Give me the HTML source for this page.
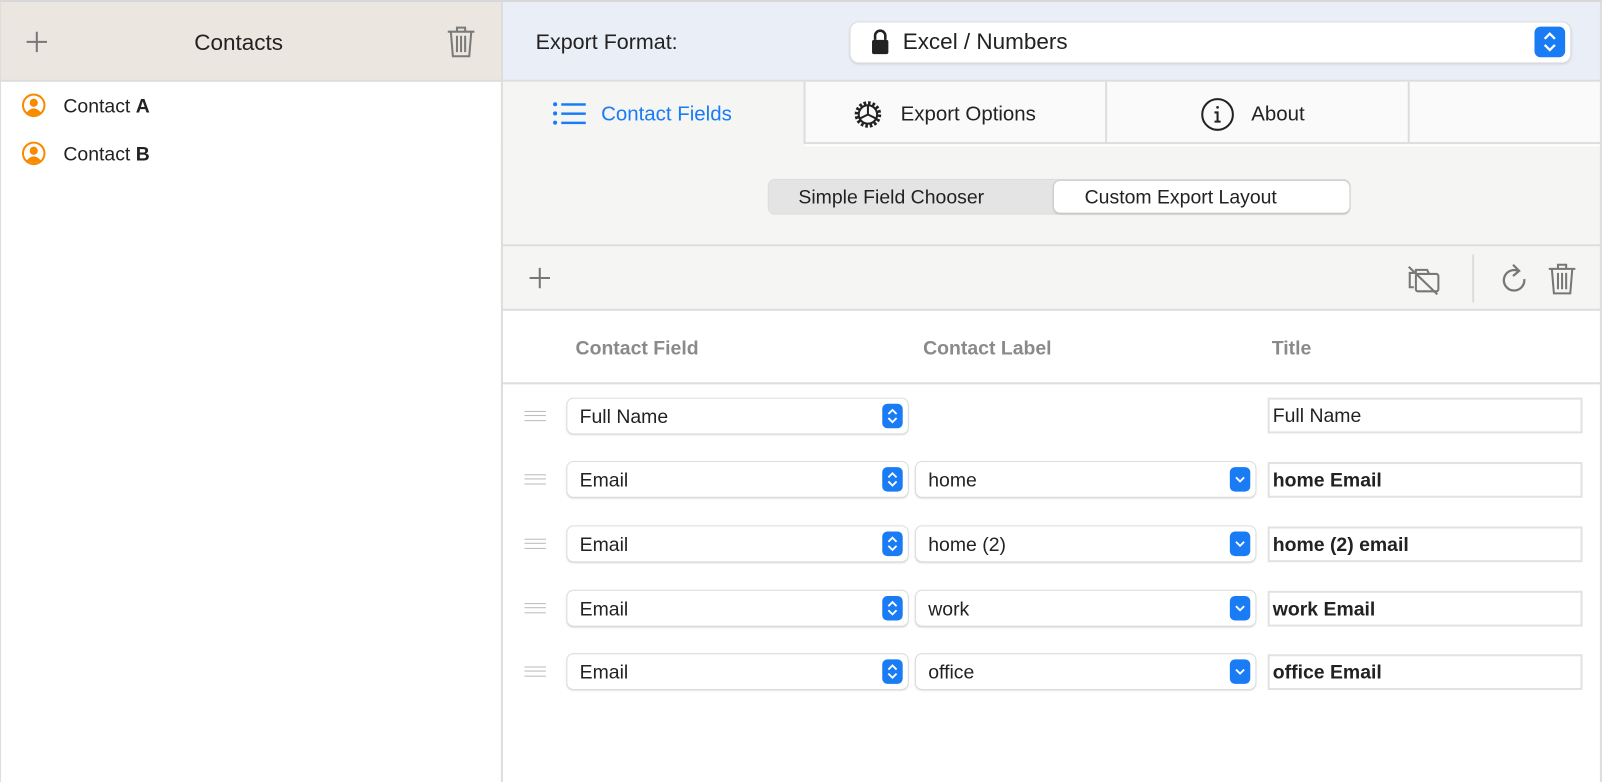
<!DOCTYPE html>
<html><head><meta charset="utf-8"><style>
*{box-sizing:border-box;margin:0;padding:0}
body{width:1602px;height:782px;overflow:hidden;background:#fff;font-family:"Liberation Sans",sans-serif;color:#222}
#w{position:absolute;left:0;top:0;width:1567px;height:765px;transform:scale(1.0223,1.0222);transform-origin:0 0}
.a{position:absolute}
.pop{position:absolute;height:34px;background:#fff;border-radius:6px;box-shadow:0 0 0 1px #ddd,0 1px 2px rgba(0,0,0,.25);font-size:19px;line-height:37px;padding-left:12px}
.st{position:absolute;right:5px;top:5px;width:20px;height:24px;border-radius:5px;background:#1a7cf5}
.inp{position:absolute;height:35px;border:2px solid #e2e2e2;font-size:19px;line-height:34px;padding-left:3px;background:#fff}
.hd{position:absolute;top:331px;font-size:19px;font-weight:bold;color:#8a8a8a}
.hnd{position:absolute;left:513px;width:21px;height:10px;border-top:1.5px solid #bbb;border-bottom:1.5px solid #bbb}
.hnd:after{content:"";position:absolute;left:0;right:0;top:2.8px;border-top:1.5px solid #bbb}
</style></head><body><div id="w">
<div class="a" style="left:0;top:0;width:1567px;height:2px;background:#d8d8d8"></div>
<!-- left -->
<div class="a" style="left:0;top:2px;width:490px;height:78px;background:#ebe6e0;border-bottom:2px solid #ddd"></div>
<div class="a" style="left:0;top:2px;width:1px;height:763px;background:#ddd"></div>
<svg class="a" style="left:25px;top:30px" width="22" height="22"><path d="M11 1V21M1 11H21" stroke="#777" stroke-width="2"/></svg>
<div class="a" style="left:190px;top:29px;font-size:22px">Contacts</div>
<svg class="a" style="left:437px;top:25px" width="28" height="32" fill="none" stroke="#7a7a7a" stroke-width="2"><path d="M1 6H27M10 6V2H18V6M4 6L6 30H22L24 6M10 10V26M14 10V26M18 10V26"/></svg>
<svg class="a" style="left:21px;top:91px" width="24" height="24"><circle cx="12" cy="12" r="10.5" fill="none" stroke="#f88a00" stroke-width="2"/><circle cx="12" cy="9.5" r="4" fill="#f88a00"/><path d="M5 19Q12 11 19 19Q12 24 5 19Z" fill="#f88a00"/></svg>
<div class="a" style="left:62px;top:94px;font-size:19px">Contact <b>A</b></div>
<svg class="a" style="left:21px;top:138px" width="24" height="24"><circle cx="12" cy="12" r="10.5" fill="none" stroke="#f88a00" stroke-width="2"/><circle cx="12" cy="9.5" r="4" fill="#f88a00"/><path d="M5 19Q12 11 19 19Q12 24 5 19Z" fill="#f88a00"/></svg>
<div class="a" style="left:62px;top:141px;font-size:19px">Contact <b>B</b></div>
<div class="a" style="left:490px;top:2px;width:2px;height:763px;background:#ddd"></div>
<!-- right header -->
<div class="a" style="left:492px;top:2px;width:1075px;height:78px;background:#eaeef6;border-bottom:2px solid #ddd"></div>
<div class="a" style="left:524px;top:30px;font-size:21px">Export Format:</div>
<div class="a" style="left:832px;top:22px;width:704px;height:39px;background:#fff;border-radius:8px;box-shadow:0 0 0 1px #ddd,0 1px 3px rgba(0,0,0,.2)"></div>
<svg class="a" style="left:851px;top:27px" width="20" height="27"><path d="M5 12V8A5 5 0 0 1 15 8V12" fill="none" stroke="#222" stroke-width="2.5"/><rect x="2" y="12" width="16" height="14" rx="2" fill="#222"/></svg>
<div class="a" style="left:883px;top:28px;font-size:22px">Excel / Numbers</div>
<div class="a" style="left:1501px;top:26px;width:30px;height:30px;border-radius:6px;background:#1a7cf5"></div>
<svg class="a" style="left:1501px;top:26px" width="30" height="30" fill="none" stroke="#fff" stroke-width="2.2"><path d="M10 12L15 7L20 12M10 18L15 23L20 18"/></svg>
<!-- tabs -->
<div class="a" style="left:492px;top:80px;width:1075px;height:61px;background:#f9faf9"></div>
<div class="a" style="left:492px;top:80px;width:295px;height:63px;background:#f5f5f3"></div>
<div class="a" style="left:787px;top:139px;width:780px;height:2px;background:#ddd"></div>
<div class="a" style="left:786px;top:80px;width:2px;height:61px;background:#ddd"></div>
<div class="a" style="left:1081px;top:80px;width:2px;height:61px;background:#ddd"></div>
<div class="a" style="left:1377px;top:80px;width:2px;height:61px;background:#ddd"></div>
<svg class="a" style="left:540px;top:98px" width="34" height="28" fill="#1a7cf5"><circle cx="3" cy="4" r="2"/><circle cx="3" cy="13" r="2"/><circle cx="3" cy="22" r="2"/><rect x="9" y="3" width="24" height="2.4"/><rect x="9" y="12" width="24" height="2.4"/><rect x="9" y="21" width="24" height="2.4"/></svg>
<div class="a" style="left:588px;top:101px;font-size:20px;color:#1a7cf5">Contact Fields</div>
<svg class="a" style="left:833px;top:96px" width="32" height="32" fill="none" stroke="#222" stroke-width="2"><circle cx="16" cy="16" r="11" stroke-dasharray="2.5 1.8" stroke-width="4"/><circle cx="16" cy="16" r="9"/><path d="M16 16L16 7M16 16L8 20M16 16L24 20"/></svg>
<div class="a" style="left:881px;top:101px;font-size:20px">Export Options</div>
<svg class="a" style="left:1174px;top:95px" width="34" height="34" fill="none" stroke="#222" stroke-width="2"><circle cx="17" cy="17" r="15"/><circle cx="17" cy="10" r="1.3" fill="#222" stroke="none"/><path d="M14 15H17V24M14 24H20"/></svg>
<div class="a" style="left:1224px;top:101px;font-size:20px">About</div>
<!-- segment area -->
<div class="a" style="left:492px;top:143px;width:1075px;height:98px;background:#f5f5f3;border-bottom:2px solid #ddd"></div>
<div class="a" style="left:752px;top:176px;width:568px;height:33px;background:#e4e4e4;border-radius:6px;box-shadow:0 0 0 1px #ddd"></div>
<div class="a" style="left:1031px;top:177px;width:289px;height:31px;background:#fff;border-radius:6px;box-shadow:0 0 0 1px #ccc,0 1px 2px rgba(0,0,0,.2)"></div>
<div class="a" style="left:781px;top:183px;font-size:19px">Simple Field Chooser</div>
<div class="a" style="left:1061px;top:183px;font-size:19px">Custom Export Layout</div>
<!-- toolbar -->
<div class="a" style="left:492px;top:241px;width:1075px;height:63px;background:#f5f5f3;border-bottom:2px solid #ddd"></div>
<svg class="a" style="left:517px;top:261px" width="22" height="22"><path d="M11 1V21M1 11H21" stroke="#777" stroke-width="2"/></svg>
<svg class="a" style="left:1376px;top:257px" width="34" height="32" fill="none" stroke="#777" stroke-width="2"><path d="M7 24H3V10H8"/><rect x="9" y="11" width="22" height="17" rx="2"/><path d="M9 11V7H20L22 11"/><path d="M2 4L30 31"/></svg>
<div class="a" style="left:1440px;top:249px;width:2px;height:47px;background:#ddd"></div>
<svg class="a" style="left:1467px;top:256px" width="28" height="34" fill="none" stroke="#777" stroke-width="2.2"><path d="M18 9A10 10 0 1 0 24 17"/><path d="M13 3L19 9L13 14"/></svg>
<svg class="a" style="left:1514px;top:257px" width="28" height="32" fill="none" stroke="#777" stroke-width="2"><path d="M1 6H27M10 6V2H18V6M4 6L6 30H22L24 6M10 10V26M14 10V26M18 10V26"/></svg>
<!-- table -->
<div class="hd" style="left:563px">Contact Field</div>
<div class="hd" style="left:903px">Contact Label</div>
<div class="hd" style="left:1244px">Title</div>
<div class="a" style="left:492px;top:374px;width:1075px;height:2px;background:#ddd"></div>
<div class="a" style="left:1565px;top:2px;width:2px;height:763px;background:#ddd"></div>

<div class="hnd" style="top:402px"></div>
<div class="pop" style="left:555px;top:390px;width:333px">Full Name<div class="st"></div><svg class="a" style="right:5px;top:5px" width="20" height="24" fill="none" stroke="#fff" stroke-width="1.8"><path d="M6 10L10 6L14 10M6 14L10 18L14 14"/></svg></div>
<div class="inp" style="left:1240px;top:389px;width:308px">Full Name</div>

<div class="hnd" style="top:464px"></div>
<div class="pop" style="left:555px;top:452px;width:333px">Email<div class="st"></div><svg class="a" style="right:5px;top:5px" width="20" height="24" fill="none" stroke="#fff" stroke-width="1.8"><path d="M6 10L10 6L14 10M6 14L10 18L14 14"/></svg></div>
<div class="pop" style="left:896px;top:452px;width:332px">home<div class="st"></div><svg class="a" style="right:5px;top:5px" width="20" height="24" fill="none" stroke="#fff" stroke-width="1.8"><path d="M6 10L10 14L14 10"/></svg></div>
<div class="inp" style="left:1240px;top:452px;width:308px;font-weight:bold">home Email</div>

<div class="hnd" style="top:527px"></div>
<div class="pop" style="left:555px;top:515px;width:333px">Email<div class="st"></div><svg class="a" style="right:5px;top:5px" width="20" height="24" fill="none" stroke="#fff" stroke-width="1.8"><path d="M6 10L10 6L14 10M6 14L10 18L14 14"/></svg></div>
<div class="pop" style="left:896px;top:515px;width:332px">home (2)<div class="st"></div><svg class="a" style="right:5px;top:5px" width="20" height="24" fill="none" stroke="#fff" stroke-width="1.8"><path d="M6 10L10 14L14 10"/></svg></div>
<div class="inp" style="left:1240px;top:515px;width:308px;font-weight:bold">home (2) email</div>

<div class="hnd" style="top:590px"></div>
<div class="pop" style="left:555px;top:578px;width:333px">Email<div class="st"></div><svg class="a" style="right:5px;top:5px" width="20" height="24" fill="none" stroke="#fff" stroke-width="1.8"><path d="M6 10L10 6L14 10M6 14L10 18L14 14"/></svg></div>
<div class="pop" style="left:896px;top:578px;width:332px">work<div class="st"></div><svg class="a" style="right:5px;top:5px" width="20" height="24" fill="none" stroke="#fff" stroke-width="1.8"><path d="M6 10L10 14L14 10"/></svg></div>
<div class="inp" style="left:1240px;top:578px;width:308px;font-weight:bold">work Email</div>

<div class="hnd" style="top:652px"></div>
<div class="pop" style="left:555px;top:640px;width:333px">Email<div class="st"></div><svg class="a" style="right:5px;top:5px" width="20" height="24" fill="none" stroke="#fff" stroke-width="1.8"><path d="M6 10L10 6L14 10M6 14L10 18L14 14"/></svg></div>
<div class="pop" style="left:896px;top:640px;width:332px">office<div class="st"></div><svg class="a" style="right:5px;top:5px" width="20" height="24" fill="none" stroke="#fff" stroke-width="1.8"><path d="M6 10L10 14L14 10"/></svg></div>
<div class="inp" style="left:1240px;top:640px;width:308px;font-weight:bold">office Email</div>
</div></body></html>
